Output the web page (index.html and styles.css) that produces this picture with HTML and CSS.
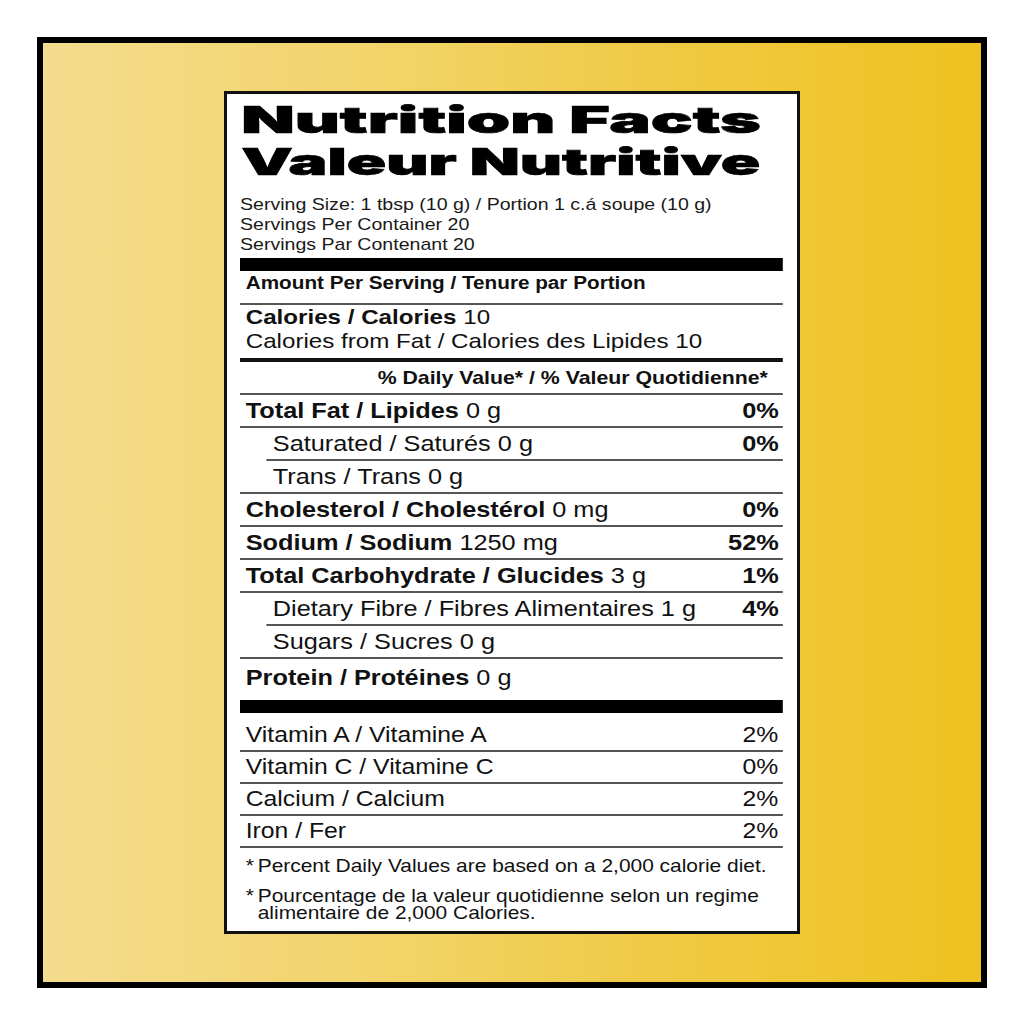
FILE: index.html
```html
<!DOCTYPE html>
<html lang="en">
<head>
<meta charset="utf-8">
<title>Nutrition Facts</title>
<link rel="stylesheet" href="styles.css">
</head>
<body>
<div class="frame">
  <div class="label">
    <div class="content">
      <h1 class="title"><span class="t t1">Nutrition Facts</span><span class="t t2">Valeur Nutritive</span></h1>
      <div class="serving">
        <div>Serving Size: 1 tbsp (10 g) / Portion 1 c.á soupe (10 g)</div>
        <div>Servings Per Container 20</div>
        <div>Servings Par Contenant 20</div>
      </div>
      <div class="bar"></div>
      <div class="amount">Amount Per Serving / Tenure par Portion</div>
      <div class="cal">
        <div><b>Calories / Calories</b> 10</div>
        <div>Calories from Fat / Calories des Lipides 10</div>
      </div>
      <div class="dv">% Daily Value* / % Valeur Quotidienne*</div>
      <div class="row"><span><b>Total Fat / Lipides</b> 0 g</span><b>0%</b></div>
      <div class="row sub ind"><span>Saturated / Saturés 0 g</span><b>0%</b></div>
      <div class="row sub"><span>Trans / Trans 0 g</span></div>
      <div class="row"><span><b>Cholesterol / Cholestérol</b> 0 mg</span><b>0%</b></div>
      <div class="row"><span><b>Sodium / Sodium</b> 1250 mg</span><b>52%</b></div>
      <div class="row"><span><b>Total Carbohydrate / Glucides</b> 3 g</span><b>1%</b></div>
      <div class="row sub ind"><span>Dietary Fibre / Fibres Alimentaires 1 g</span><b>4%</b></div>
      <div class="row sub"><span>Sugars / Sucres 0 g</span></div>
      <div class="row protein"><span><b>Protein / Protéines</b> 0 g</span></div>
      <div class="bar"></div>
      <div class="vit first"><span>Vitamin A / Vitamine A</span><span>2%</span></div>
      <div class="vit"><span>Vitamin C / Vitamine C</span><span>0%</span></div>
      <div class="vit"><span>Calcium / Calcium</span><span>2%</span></div>
      <div class="vit"><span>Iron / Fer</span><span>2%</span></div>
      <div class="notes">
        <p class="note"><span class="ast">*</span><span>Percent Daily Values are based on a 2,000 calorie diet.</span></p>
        <p class="note"><span class="ast">*</span><span>Pourcentage de la valeur quotidienne selon un regime alimentaire de 2,000 Calories.</span></p>
      </div>
    </div>
  </div>
</div>
</body>
</html>
```
FILE: styles.css
```css
* { box-sizing: border-box; }
html, body { margin: 0; padding: 0; background: #ffffff; }
body {
  width: 1024px;
  height: 1024px;
  padding: 37px 37px 36px 37px;
  font-family: "Liberation Sans", Arial, sans-serif;
  color: #111;
  overflow: hidden;
}
.frame {
  width: 950px;
  height: 951px;
  border: 6px solid #000;
  background: linear-gradient(to right, #f4dc8e 0%, #f2d46a 35%, #f0ca45 65%, #eec21f 100%);
  display: flex;
  align-items: center;
  justify-content: center;
}
.label {
  width: 576px;
  height: 843px;
  background: #fff;
  border: 3px solid #111;
  padding: 0 0 0 13px;
  overflow: hidden;
}
.content {
  width: 472px;
  transform: scaleX(1.15);
  transform-origin: left top;
  display: flex;
  flex-direction: column;
}
.title {
  margin: 5px 0 0 1px;
  font-family: "Inter", "DejaVu Sans", sans-serif;
  font-size: 37px;
  line-height: 42px;
  font-weight: 900;
  height: 84px;
  display: flex;
  flex-direction: column;
  align-items: flex-start;
}
.title .t {
  display: block;
  width: max-content;
  white-space: nowrap;
  color: #000;
  -webkit-text-stroke: 0.7px #000;
  letter-spacing: 0;
  transform-origin: left center;
}
.title .t1 { transform: scaleX(1.635); }
.title .t2 { transform: scaleX(1.53); }
.serving {
  margin-top: 12px;
  font-size: 17px;
  line-height: 20px;
  color: #1a1a1a;
}
.bar {
  height: 13px;
  background: #000;
  margin-top: 3px;
  flex: none;
}
.amount {
  font-size: 18px;
  font-weight: 700;
  line-height: 24px;
  padding: 0 0 8px 5px;
  border-bottom: 2px solid #555;
}
.cal {
  font-size: 21px;
  line-height: 24px;
  padding: 0 0 5px 5px;
  border-bottom: 4px solid #111;
}
.dv {
  font-size: 18.5px;
  font-weight: 700;
  line-height: 31px;
  text-align: right;
  padding-right: 13px;
  border-bottom: 2px solid #555;
}
.row {
  display: flex;
  justify-content: space-between;
  align-items: center;
  height: 33px;
  padding: 0 3.5px 0 5px;
  font-size: 22px;
  border-bottom: 2px solid #555;
  flex: none;
}
.row.ind { margin-left: 23px; }
.row.sub { padding-left: 28.5px; }
.row.sub.ind { padding-left: 5.5px; }
.row.protein {
  height: 38px;
  border-bottom: none;
}
.vit {
  display: flex;
  justify-content: space-between;
  align-items: center;
  height: 32px;
  padding: 0 4px 0 5px;
  font-size: 21.5px;
  border-bottom: 2px solid #555;
  flex: none;
}
.vit.first { height: 39px; padding-top: 7px; }
.notes {
  padding: 10px 0 0 5px;
  font-size: 18.2px;
  line-height: 17px;
}
.note {
  margin: 0 0 13px 0;
  display: flex;
}
.ast { width: 10.4px; flex: none; }
```
